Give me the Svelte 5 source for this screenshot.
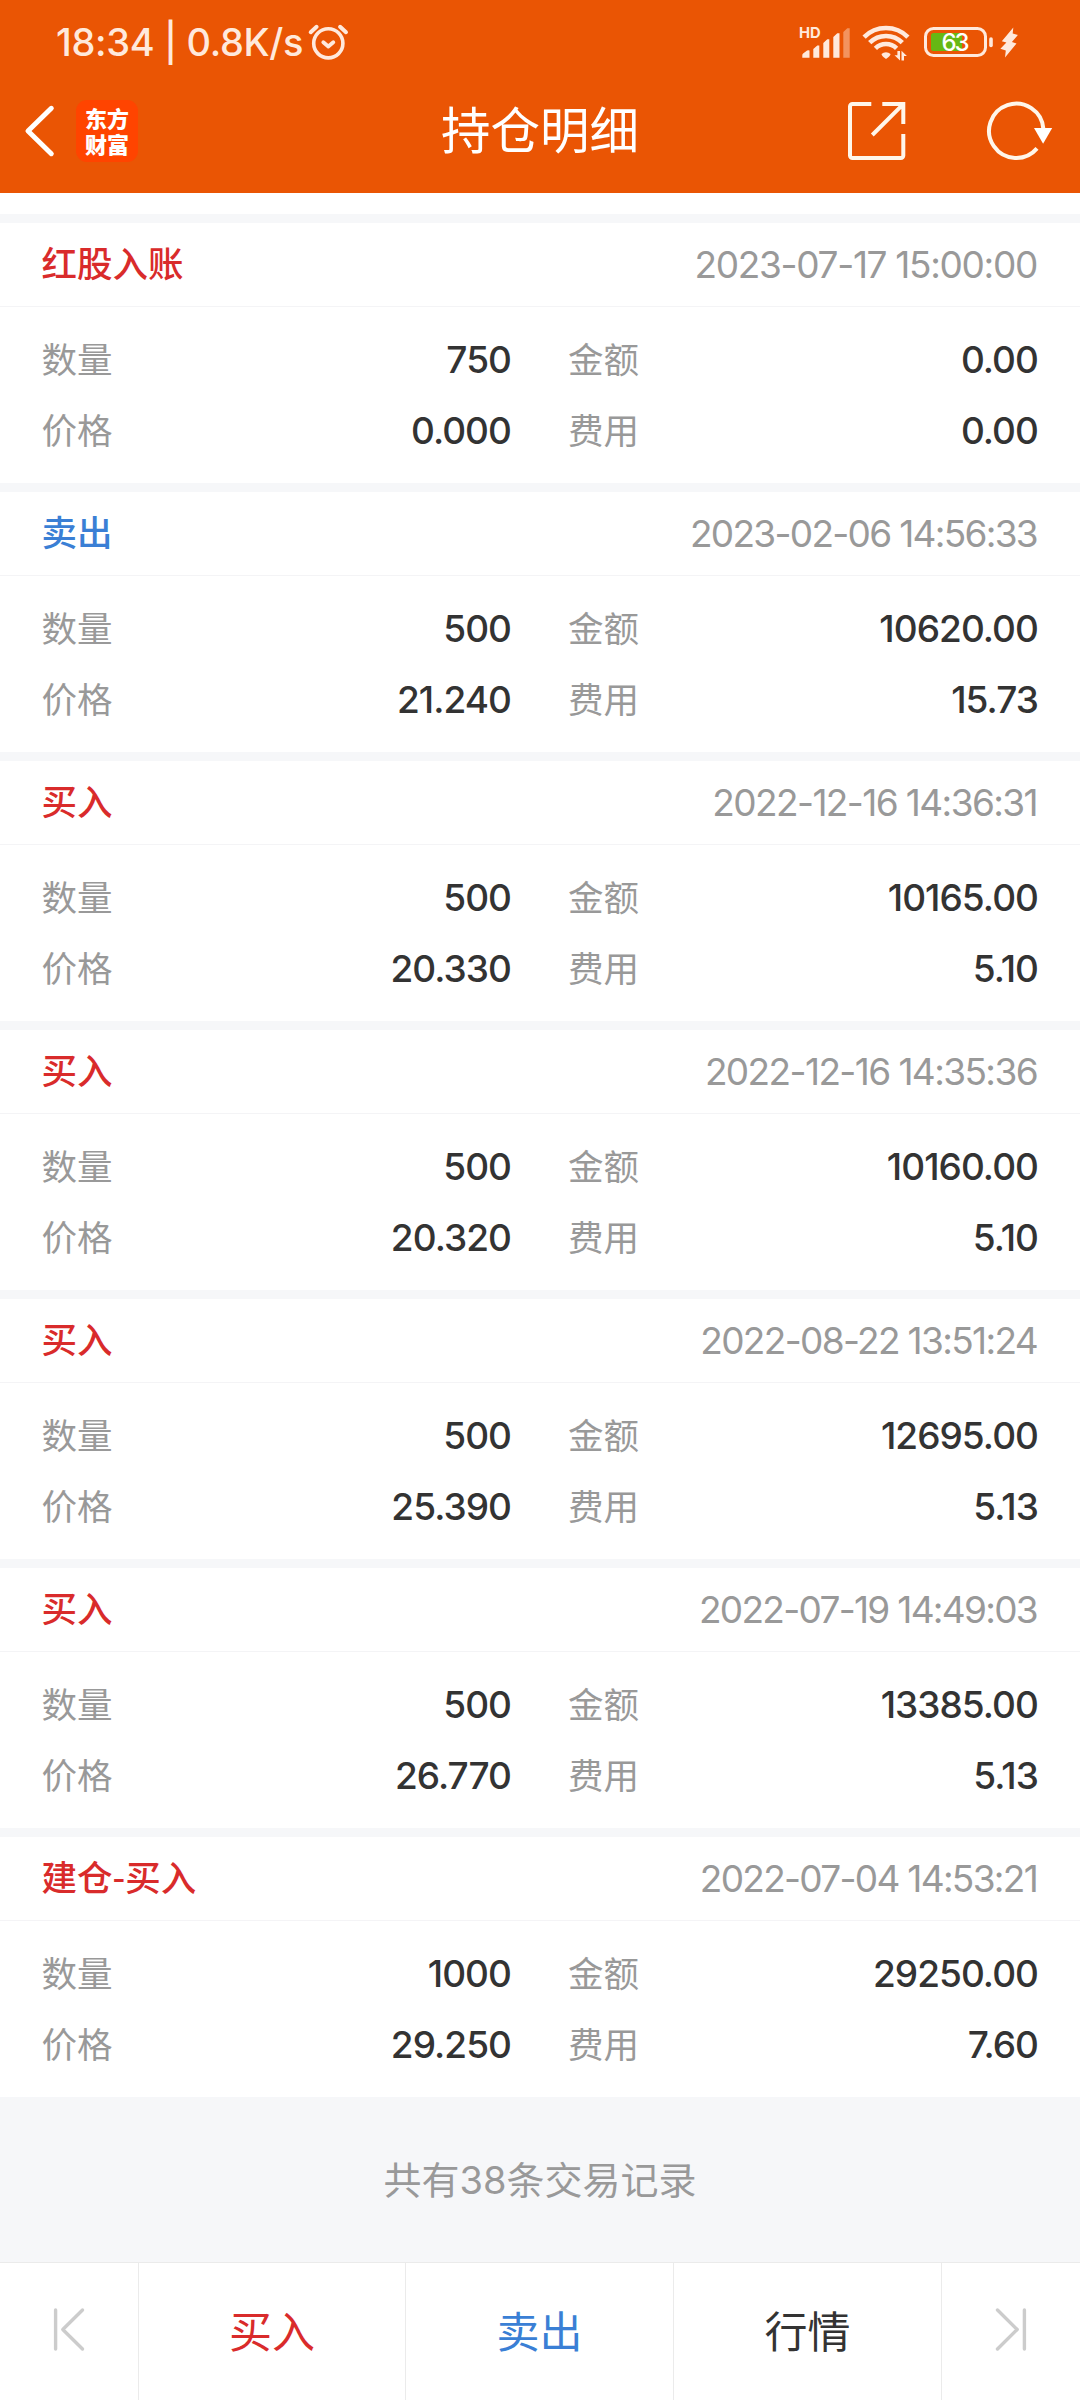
<script>
  const records = [
    { type: '红股入账', tone: 'red', time: '2023-07-17 15:00:00', track: -1.32, qty: '750', amount: '0.00', price: '0.000', fee: '0.00' },
    { type: '卖出', tone: 'blue', time: '2023-02-06 14:56:33', track: -1.7, qty: '500', amount: '10620.00', price: '21.240', fee: '15.73' },
    { type: '买入', tone: 'red', time: '2022-12-16 14:36:31', track: -1.6, qty: '500', amount: '10165.00', price: '20.330', fee: '5.10' },
    { type: '买入', tone: 'red', time: '2022-12-16 14:35:36', track: -1.6, qty: '500', amount: '10160.00', price: '20.320', fee: '5.10' },
    { type: '买入', tone: 'red', time: '2022-08-22 13:51:24', track: -1.66, qty: '500', amount: '12695.00', price: '25.390', fee: '5.13' },
    { type: '买入', tone: 'red', time: '2022-07-19 14:49:03', track: -1.7, qty: '500', amount: '13385.00', price: '26.770', fee: '5.13' },
    { type: '建仓-买入', tone: 'red', time: '2022-07-04 14:53:21', track: -1.7, qty: '1000', amount: '29250.00', price: '29.250', fee: '7.60' }
  ];
</script>

{#snippet skip(flip)}
  <svg class="skip" class:flip width="138" height="60" viewBox="0 0 138 60" fill="none" stroke="#ccc" stroke-width="3.4" stroke-linecap="round" stroke-linejoin="round">
    <path d="M55.600 10V49M82.500 10L62.800 29.500 82.500 49" />
  </svg>
{/snippet}

<div class="screen">
  <header>
    <div class="status">
      <span class="clock">18:34 | 0.8K/s</span>
      <svg width="42" height="42" viewBox="0 0 42 42" fill="none" stroke="#ffe9dc" stroke-linecap="round" stroke-linejoin="round">
        <circle cx="21.3" cy="22.3" r="14.6" stroke-width="3.6" />
        <path d="M3.700 11.200 9.600 5.800M39 11.200 33.100 5.800" stroke-width="4" />
        <path d="M16.300 21.200l5 4.300 5-4.300" stroke-width="3.8" />
      </svg>
      <svg class="indicators" width="240" height="54" viewBox="0 0 240 54" fill="#ffe9dc">
        <text x="9" y="22.7" class="hd">HD</text>
        <path d="M12.300 42.700v-2.500a2 2 0 0 1 .8-1.600l4-3a2 2 0 0 1 2.400 0v7.100zM23.300 42.700V34l4-3.500h2v12.200zM33.300 42.700V28l4-3.700h2v18.400zM43.300 42.700V22l4-3.700h2.200v24.400z" />
        <path d="M53.300 42.700V17l4-3.700h2.400v29.400z" opacity=".42" />
        <g fill="none" stroke="#ffe9dc" stroke-width="4.6">
          <path d="M74.100 22.100a31 31 0 0 1 43.800 0" />
          <path d="M79.700 27.700a23 23 0 0 1 32.600 0" />
          <path d="M85.400 33.400a15 15 0 0 1 21.200 0" />
        </g>
        <path d="M91.500 39a6.500 6.500 0 0 1 9 0q0 2-4.500 5-4.500-3-4.500-5z" />
        <path d="M107.400 36h2.600v9.500l-5.500-5.300h2.900zM111.500 45.500V35.800l5.400 5.200h-2.900v4.500z" />
        <rect x="135.5" y="13.5" width="60" height="27" rx="8" fill="none" stroke="#ffe9dc" stroke-width="3" />
        <rect x="141" y="18" width="31" height="18" rx="2.5" fill="#66b814" />
        <rect x="199.2" y="22.3" width="3.6" height="10" rx="1.8" />
        <text x="151.5" y="36" class="level">63</text>
        <path d="M223.300 12.500 211.800 26.200l4.600 1.300-6 6.200 5.400 1.700-.8 7 11.500-14-4.600-1.500 6-7-5.200-1.500z" />
      </svg>
    </div>
    <div class="nav">
      <div class="left">
        <svg width="76" height="60" viewBox="0 0 76 60" fill="none" stroke="#fff" stroke-width="5" stroke-linecap="round" stroke-linejoin="round">
          <path d="M51.300 7.300 28 30l23.300 22.700" />
        </svg>
        <div class="logo">东方财富</div>
      </div>
      <h1>持仓明细</h1>
      <svg class="actions" width="240" height="82" viewBox="0 0 240 82" fill="none" stroke="#fff6ea" stroke-width="4">
        <path d="M41.300 14H22.500a2.500 2.500 0 0 0-2.500 2.500v49a2.500 2.500 0 0 0 2.500 2.500h48.300a2.500 2.500 0 0 0 2.500-2.500V44" />
        <path d="M52.300 14h21v20M73 14.300 42.300 45" />
        <path d="M207 58.400A27.200 27.200 0 1 1 213.400 39" />
        <path d="M204 38h18.200l-9.100 15.700z" fill="#fff" stroke="none" />
      </svg>
    </div>
  </header>

  <main>
    {#each records as r}
      <article>
        <div class="head">
          <span class="type {r.tone}">{r.type}</span>
          <time style="letter-spacing: {r.track}px">{r.time}</time>
        </div>
        <dl>
          <dt>数量</dt><dd>{r.qty}</dd>
          <dt>金额</dt><dd>{r.amount}</dd>
          <dt>价格</dt><dd>{r.price}</dd>
          <dt>费用</dt><dd>{r.fee}</dd>
        </dl>
      </article>
    {/each}
    <p class="total">共有38条交易记录</p>
  </main>

  <footer>
    <div class="cell">{@render skip(false)}</div>
    <div class="cell red">买入</div>
    <div class="cell blue">卖出</div>
    <div class="cell">行情</div>
    <div class="cell">{@render skip(true)}</div>
  </footer>
</div>

<style>
  :global(body) { background: #fff; }
  .screen { width: 1080px; height: 2400px; overflow: hidden; display: flex; flex-direction: column; font-family: Inter, "Noto Sans CJK SC", sans-serif; background: #fff; color: #333; }
  svg { display: block; flex: none; }
  header { height: 193px; background: #ea5504; color: #fff; }
  .status { display: flex; height: 84px; align-items: center; padding: 0 50px 0 56px; }
  .clock { width: 251px; font-size: 38px; font-weight: 500; letter-spacing: -.35px; white-space: pre; color: #ffe9dc; }
  .indicators { margin-left: auto; }
  .hd { font-size: 14.8px; font-weight: 700; }
  .level { font-size: 24px; font-weight: 500; letter-spacing: -2px; fill: #fff; }
  .nav { display: grid; grid-template-columns: 1fr auto 1fr; align-items: center; height: 93px; }
  .left { display: flex; align-items: center; }
  .logo { box-sizing: border-box; width: 62px; height: 62px; padding: 4px 8px 6px; border-radius: 11px; background: #ff4400; font: 900 22px/26px "Noto Sans CJK SC", sans-serif; text-align: center; word-break: break-all; }
  h1 { margin: 0; padding-top: 1px; font-size: 49.5px; line-height: 60px; font-weight: 400; }
  .actions { justify-self: end; margin-right: 10px; }
  main { flex: 1; display: flex; flex-direction: column; padding-top: 21px; }
  article { box-sizing: border-box; flex: none; height: 269px; border-top: 9px solid #f6f7f9; }
  .head { display: flex; justify-content: space-between; align-items: center; height: 83px; padding: 0 41px 0 41.5px; border-bottom: 1px solid #f4f4f6; }
  .type { padding-bottom: 6px; font-family: "Noto Sans CJK SC", sans-serif; font-size: 35.5px; font-weight: 500; }
  .red { color: #d92b2b; }
  .blue { color: #3a7fd5; }
  time { padding-right: 2px; font-size: 37px; color: #999; }
  dl { margin: 0; padding: 17px 41px 0 41.5px; display: grid; grid-template-columns: 80px 390.5px 56px 80px 1fr; grid-auto-rows: 71px; align-items: center; }
  dt { padding-bottom: 4px; font-size: 35.5px; color: #999; }
  dt:nth-of-type(even) { grid-column: 4; }
  dd { margin: 0; padding-right: 1px; font-size: 37px; font-weight: 500; letter-spacing: -.95px; color: #333; text-align: right; }
  .total { flex: 1; margin: 0; display: flex; align-items: center; justify-content: center; padding-bottom: 4px; font-size: 38px; color: #999; background: #f6f7f9; }
  footer { flex: none; box-sizing: border-box; height: 138px; display: grid; grid-template-columns: 139px 267px 268px 268px 138px; border-top: 1px solid #ebebeb; }
  .cell { display: flex; align-items: center; justify-content: center; padding-bottom: 6px; border-right: 1px solid #ebebeb; font-size: 43px; }
  .skip { margin-top: 2px; }
  .cell:last-child { border-right: 0; }
  .flip { transform: scaleX(-1); }
</style>
